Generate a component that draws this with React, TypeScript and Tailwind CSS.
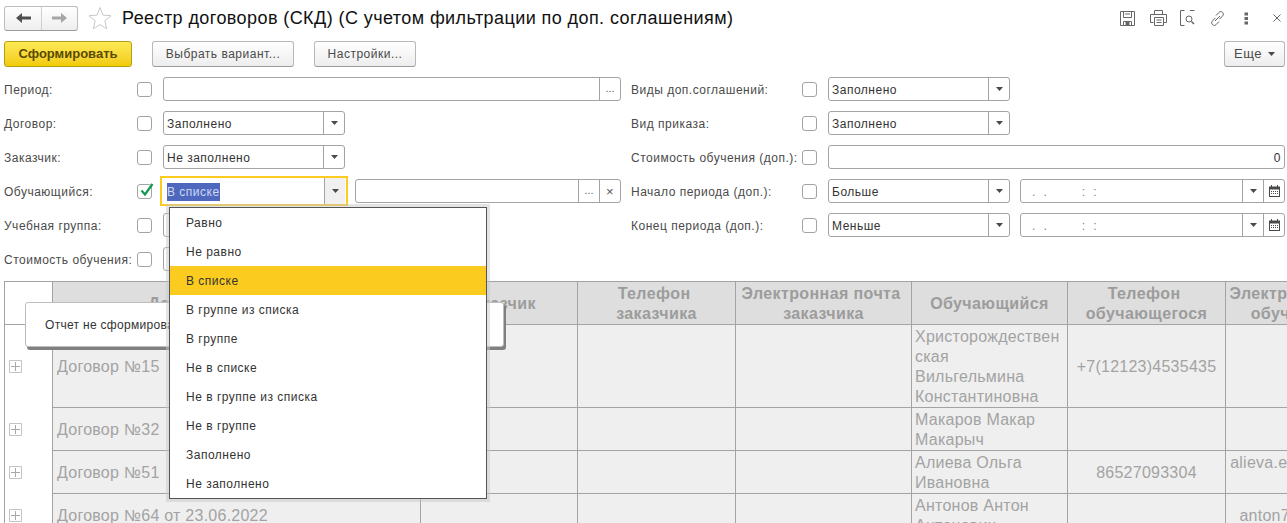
import React from 'react';
import { clsx } from 'clsx';

const ITEMS = ['Равно', 'Не равно', 'В списке', 'В группе из списка', 'В группе', 'Не в списке', 'Не в группе из списка', 'Не в группе', 'Заполнено', 'Не заполнено'];

const Caret = () => (
  <svg width="7" height="4" viewBox="0 0 7 4"><path d="M0 0h7L3.5 4z" fill="#4a4a4a" /></svg>
);

const CalendarIcon = () => (
  <svg width="11" height="12" viewBox="0 0 11 12">
    <path d="M0 1.5h11V12H0z" fill="#4a4a4a" />
    <path d="M1 4.5h9V11H1z" fill="#fff" />
    <path d="M2 0h1v2H2zM8 0h1v2H8z" fill="#4a4a4a" />
    <path d="M2 6h1v1H2zM4 6h1v1H4zM6 6h1v1H6zM8 6h1v1H8zM2 8h1v1H2zM4 8h1v1H4zM6 8h1v1H6zM8 8h1v1H8z" fill="#4a4a4a" />
  </svg>
);

const Checkbox = ({ checked }: { checked?: boolean }) => (
  <div className="relative w-[15px] h-[15px] shrink-0 rounded-[3px] border border-[#a3a3a3] bg-white">
    {checked && (
      <svg className="absolute left-[2px] -top-[3px]" width="14" height="15" viewBox="0 0 14 15">
        <path d="M1.5 8.5l3.5 4L12.5 2" fill="none" stroke="#119a4f" strokeWidth="2.2" />
      </svg>
    )}
  </div>
);

const FieldButton = ({ children, focused }: { children: React.ReactNode; focused?: boolean }) => (
  <div className={clsx('w-[21px] h-full shrink-0 flex items-center justify-center border-l border-[#a3a3a3]', focused && 'bg-[#f0f0f0]')}>
    {children}
  </div>
);

const Dots = () => <span className="text-[11px] leading-none tracking-normal text-[#666] pb-[1px]">...</span>;

const Select = ({ value, className }: { value: string; className?: string }) => (
  <div className={clsx('h-[24px] flex items-center rounded-[3px] border border-[#a3a3a3] bg-white', className)}>
    <span className="flex-1 pl-[3px] pt-px text-[#333] truncate">{value}</span>
    <FieldButton><Caret /></FieldButton>
  </div>
);

const DateField = () => (
  <div className="w-[265px] ml-[10px] h-[24px] flex items-center rounded-[3px] border border-[#a3a3a3] bg-white">
    <span className="flex-1 pl-[11px] pt-px text-[#6b8a9a] whitespace-pre leading-none">.  .         :  :</span>
    <FieldButton><Caret /></FieldButton>
    <FieldButton><CalendarIcon /></FieldButton>
  </div>
);

const FormRow = ({ label, labelWidth, checked, children }: { label: string; labelWidth: string; checked?: boolean; children?: React.ReactNode }) => (
  <div className="h-[34px] flex items-center">
    <div className={clsx('shrink-0 pt-px text-[#4a4a4a] whitespace-nowrap', labelWidth)}>{label}</div>
    <Checkbox checked={checked} />
    <div className="ml-[11px] flex flex-1 items-center">{children}</div>
  </div>
);

const Button = ({ children, className }: { children: React.ReactNode; className?: string }) => (
  <div className={clsx('h-[26px] flex items-center justify-center rounded-[3px] border border-[#b8b8b8] border-b-[#9c9c9c] bg-gradient-to-b from-white to-[#ededed] text-[#4a4a4a]', className)}>
    {children}
  </div>
);

const ToolIcons = () => (
  <div className="flex items-center text-[#666]">
    <svg className="mr-[15px]" width="15" height="15" viewBox="0 0 15 15" fill="none" stroke="#666">
      <path d="M.5.5h14v14H.5zM3.5.5v6h8v-6M5 3h5M3.5 14.5V10.5h8v4" />
      <path d="M6 11h3v3H6z" fill="#666" />
    </svg>
    <svg className="mr-[13px]" width="17" height="16" viewBox="0 0 17 16" fill="none" stroke="#666">
      <path d="M4.5 4.5V.5h8v4M3.5 12.5h-3v-8h16v8h-3M4.5 7.5h9v8h-9zM6.5 10h5M6.5 12.5h5" />
    </svg>
    <svg className="mr-[15px]" width="15" height="16" viewBox="0 0 15 16" fill="none" stroke="#666">
      <path d="M4.5.5h-4v15h4M10 .5h4.5" />
      <circle cx="9" cy="9" r="3" />
      <path d="M11.5 11.5l2.5 2.5" strokeWidth="1.5" />
    </svg>
    <svg className="mr-[19px]" width="15" height="15" viewBox="0 0 15 15" fill="none" stroke="#666">
      <path d="M6 4.5l3-3.2c1-1 2.5-1 3.5 0s1.2 2.5.2 3.5l-3.2 3.4M9 10.5l-3 3.2c-1 1-2.5 1-3.5 0s-1.2-2.5-.2-3.5l3.2-3.4M5 10l5-5" />
    </svg>
    <svg className="mr-[24px]" width="5" height="13" viewBox="0 0 5 13" fill="#666">
      <rect x="0.5" y="0.5" width="3.5" height="3" /><rect x="0.5" y="5" width="3.5" height="3" /><rect x="0.5" y="9.5" width="3.5" height="3" />
    </svg>
    <svg width="8" height="8" viewBox="0 0 8 8" stroke="#666" fill="none">
      <path d="M.5.5l7 7M7.5.5l-7 7" />
    </svg>
  </div>
);

const PlusBox = () => (
  <svg width="13" height="13" viewBox="0 0 13 13" fill="none" stroke="#c4c4c4">
    <path d="M.5.5h12v12H.5z" />
    <path d="M6.5 2v9M2 6.5h9" stroke="#a8a8a8" />
  </svg>
);

const HEAD = ['', 'Договор на обучение', 'Заказчик', 'Телефон\u00a0 заказчика', 'Электронная почта\u00a0 заказчика', 'Обучающийся', 'Телефон\u00a0 обучающегося', 'Электронная почта\u00a0 обучающегося'];

const ROWS = [
  { h: 'h-[83px]', contract: 'Договор №15', student: <>Христорождествен<br />ская<br />Вильгельмина Константиновна</>, phone: '+7(12123)4535435', mail: '' },
  { h: 'h-[43px]', contract: 'Договор №32', student: 'Макаров Макар Макарыч', phone: '', mail: '' },
  { h: 'h-[43px]', contract: 'Договор №51', student: 'Алиева Ольга Ивановна', phone: '86527093304', mail: <>alieva.elena@yandex.<wbr />ru</> },
  { h: 'h-[43px]', contract: 'Договор №64 от 23.06.2022', student: 'Антонов Антон Антонович', phone: '', mail: 'anton7778@mail.ru' },
];

const ReportTable = () => (
  <div className="flex-1 min-h-0 ml-[4px] overflow-hidden">
    <table className="table-fixed border-collapse w-[1393px] text-[16px] leading-[20px] tracking-[0.25px] text-[#a3a3a3]">
      <colgroup>
        <col className="w-[48px]" />
        <col className="w-[368px]" />
        <col className="w-[157px]" />
        <col className="w-[158px]" />
        <col className="w-[176px]" />
        <col className="w-[156px]" />
        <col className="w-[158px]" />
        <col className="w-[172px]" />
      </colgroup>
      <thead>
        <tr className="h-[43px]">
          {HEAD.map((title, i) => (
            <th key={i} className={clsx('border border-[#a3a3a3] px-[2px] pt-px font-bold text-center text-[#9c9c9c] tracking-[0.4px]', i === 0 ? 'bg-white border-r-0' : 'bg-[#dedede]')}>
              {title}
            </th>
          ))}
        </tr>
      </thead>
      <tbody>
        {ROWS.map((row) => (
          <tr key={row.contract} className={row.h}>
            <td className="border-l border-[#a3a3a3] bg-white pl-[4px] align-middle">
              <div className="flex"><PlusBox /></div>
            </td>
            <td className="border border-[#a3a3a3] bg-[#efefef] pl-[4px] pt-px whitespace-nowrap">{row.contract}</td>
            <td className="border border-[#a3a3a3] bg-[#efefef]" />
            <td className="border border-[#a3a3a3] bg-[#efefef]" />
            <td className="border border-[#a3a3a3] bg-[#efefef]" />
            <td className="border border-[#a3a3a3] bg-[#efefef] px-[3px] pt-px">{row.student}</td>
            <td className="border border-[#a3a3a3] bg-[#efefef] pt-px text-center">{row.phone}</td>
            <td className="border border-[#a3a3a3] bg-[#efefef] pt-px text-center">{row.mail}</td>
          </tr>
        ))}
      </tbody>
    </table>
  </div>
);

export default function App() {
  return (
    <div className="relative w-[1287px] h-[523px] overflow-hidden flex flex-col bg-white text-[12px] font-['Liberation_Sans',Arial,sans-serif] tracking-[0.5px]">
      <div className="h-[36px] shrink-0 flex items-center pl-[4px] pr-[6px]">
        <div className="w-[74px] h-[25px] flex rounded-[3px] border border-[#bdbdbd] border-b-[#9c9c9c] bg-gradient-to-b from-white to-[#eeeeee]">
          <div className="w-[37px] flex items-center justify-center border-r border-[#cfcfcf]">
            <svg width="15" height="10" viewBox="0 0 15 10" fill="#4f4f4f"><path d="M0 5l6-5v3.5h9v3H6V10z" /></svg>
          </div>
          <div className="flex-1 flex items-center justify-center">
            <svg width="15" height="10" viewBox="0 0 15 10" fill="#a6a6a6"><path d="M15 5L9 0v3.5H0v3h9V10z" /></svg>
          </div>
        </div>
        <svg className="ml-[10px] shrink-0" width="24" height="24" viewBox="0 0 24 24" fill="none" stroke="#c9c9c9">
          <path d="M12 1.5l3 7.6 8 .6-6.2 5.2 2 8-6.8-4.3-6.8 4.3 2-8L1 9.7l8-.6z" />
        </svg>
        <h1 className="ml-[10px] flex-1 text-[18px] tracking-[0.42px] font-normal text-[#111] whitespace-nowrap">
          Реестр договоров (СКД) (С учетом фильтрации по доп. соглашениям)
        </h1>
        <ToolIcons />
      </div>

      <div className="h-[36px] shrink-0 flex items-center pl-[4px] pr-[2px]">
        <div className="w-[128px] h-[26px] flex items-center justify-center rounded-[3px] border border-[#b59f16] bg-gradient-to-b from-[#fdea55] to-[#f2cb00] font-bold text-[13px] tracking-normal text-[#5a4a00]">
          Сформировать
        </div>
        <Button className="ml-[20px] w-[142px]">Выбрать вариант...</Button>
        <Button className="ml-[20px] w-[102px]">Настройки...</Button>
        <Button className="ml-auto w-[61px] gap-[6px] text-[13px]">Еще <Caret /></Button>
      </div>

      <div className="shrink-0 flex pl-[4px] pr-[2px] mb-[5px]">
        <div className="w-[617px] shrink-0">
          <FormRow label="Период:" labelWidth="w-[133px]">
            <div className="flex-1 h-[24px] flex items-center justify-end rounded-[3px] border border-[#a3a3a3] bg-white">
              <FieldButton><Dots /></FieldButton>
            </div>
          </FormRow>
          <FormRow label="Договор:" labelWidth="w-[133px]"><Select value="Заполнено" className="w-[182px]" /></FormRow>
          <FormRow label="Заказчик:" labelWidth="w-[133px]"><Select value="Не заполнено" className="w-[182px]" /></FormRow>
          <FormRow label="Обучающийся:" labelWidth="w-[133px]" checked>
            <div className="-ml-[3px] w-[188px] h-[30px] shrink-0 flex items-center border-2 border-[#fbcb1f] pl-[5px] pr-[1px] bg-white">
              <span className="flex-1 pt-px"><span className="bg-[#4f68bd] text-[#cfd8f5] py-[2px]">В списке</span></span>
              <FieldButton focused><Caret /></FieldButton>
            </div>
            <div className="ml-[7px] flex-1 h-[24px] flex items-center justify-end rounded-[3px] border border-[#a3a3a3] bg-white">
              <FieldButton><Dots /></FieldButton>
              <FieldButton><span className="text-[13px] leading-none text-[#555]">×</span></FieldButton>
            </div>
          </FormRow>
          <FormRow label="Учебная группа:" labelWidth="w-[133px]"><Select value="" className="w-[182px]" /></FormRow>
          <FormRow label="Стоимость обучения:" labelWidth="w-[133px]"><Select value="" className="w-[182px]" /></FormRow>
        </div>

        <div className="ml-[10px] flex-1">
          <FormRow label="Виды доп.соглашений:" labelWidth="w-[171px]"><Select value="Заполнено" className="w-[182px]" /></FormRow>
          <FormRow label="Вид приказа:" labelWidth="w-[171px]"><Select value="Заполнено" className="w-[182px]" /></FormRow>
          <FormRow label="Стоимость обучения (доп.):" labelWidth="w-[171px]">
            <div className="flex-1 h-[24px] flex items-center justify-end pr-[3px] pt-px rounded-[3px] border border-[#a3a3a3] bg-white text-[#333]">0</div>
          </FormRow>
          <FormRow label="Начало периода (доп.):" labelWidth="w-[171px]">
            <Select value="Больше" className="w-[182px]" /><DateField />
          </FormRow>
          <FormRow label="Конец периода (доп.):" labelWidth="w-[171px]">
            <Select value="Меньше" className="w-[182px]" /><DateField />
          </FormRow>
        </div>
      </div>

      <ReportTable />

      {/* "report not generated" notice over the table */}
      <div className="absolute left-[25px] top-[302px] w-[479px] h-[45px] flex items-center pl-[19px] rounded-[3px] border border-[#bdbdbd] bg-white shadow-[2px_3px_0_#808080] text-[#333] tracking-[0.3px] whitespace-nowrap">
        Отчет не сформирован. Нажмите "Сформировать" для получения отчета.
      </div>

      {/* open condition list */}
      <div className="absolute left-[169px] top-[207px] w-[318px] border border-[#555] bg-white shadow-[0_0_0_3px_rgba(200,200,200,0.5)] text-[#333]">
        {ITEMS.map((item) => (
          <div key={item} className={clsx('h-[29px] flex items-center pl-[16px]', item === 'В списке' && 'bg-[#fbcb1f]')}>{item}</div>
        ))}
      </div>
    </div>
  );
}
